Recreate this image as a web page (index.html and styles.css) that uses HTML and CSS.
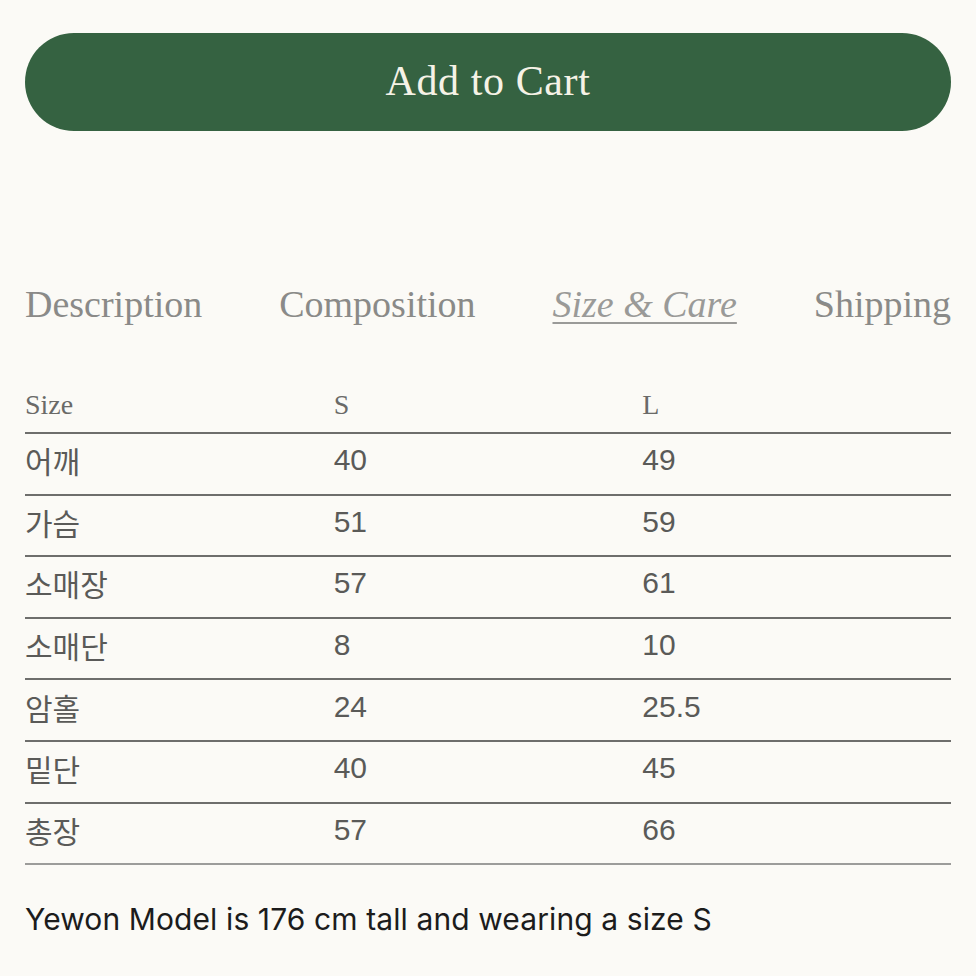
FILE: index.html
```html
<!DOCTYPE html>
<html lang="ko">
<head>
<meta charset="utf-8">
<title>Size &amp; Care</title>
<link rel="stylesheet" href="styles.css">
</head>
<body>
<main class="page">
  <button class="cart-btn" type="button">Add to Cart</button>

  <nav class="tabs">
    <span class="tab">Description</span>
    <span class="tab">Composition</span>
    <span class="tab tab-active">Size &amp; Care</span>
    <span class="tab">Shipping</span>
  </nav>

  <div class="size-table">
    <div class="row head"><span>Size</span><span>S</span><span>L</span></div>
    <div class="row"><span>어깨</span><span>40</span><span>49</span></div>
    <div class="row"><span>가슴</span><span>51</span><span>59</span></div>
    <div class="row"><span>소매장</span><span>57</span><span>61</span></div>
    <div class="row"><span>소매단</span><span>8</span><span>10</span></div>
    <div class="row"><span>암홀</span><span>24</span><span>25.5</span></div>
    <div class="row"><span>밑단</span><span>40</span><span>45</span></div>
    <div class="row last"><span>총장</span><span>57</span><span>66</span></div>
  </div>

  <p class="model-note">Yewon Model is 176 cm tall and wearing a size S</p>
</main>
</body>
</html>
```

FILE: styles.css
```css
html, body {
  margin: 0;
  padding: 0;
  background: #fbfaf6;
}

.page {
  padding: 33px 25px 0;
  display: flex;
  flex-direction: column;
}

.cart-btn {
  height: 98px;
  border: none;
  border-radius: 49px;
  background: #356241;
  color: #f5f2e6;
  font-family: "Liberation Serif", serif;
  font-size: 42px;
  letter-spacing: 0.6px;
  padding: 0 0 2px;
  cursor: pointer;
}

.tabs {
  margin-top: 151px;
  display: flex;
  justify-content: space-between;
  font-family: "Liberation Serif", serif;
  font-size: 38px;
  line-height: 44px;
  color: #8a8a88;
}

.tab-active {
  font-style: italic;
  color: #9a9a98;
  text-decoration: underline;
  text-decoration-thickness: 2px;
  text-underline-offset: 5px;
}

.size-table {
  margin-top: 60px;
  display: flex;
  flex-direction: column;
}

.row {
  display: grid;
  grid-template-columns: repeat(3, 1fr);
  align-items: center;
  height: 61.6px;
  box-sizing: border-box;
  border-bottom: 2px solid #6e6e6c;
  padding-bottom: 7px;
  font-family: "Liberation Sans", "Noto Sans CJK KR", sans-serif;
  font-size: 30px;
  color: #5a5a58;
}

.row.head {
  height: 48px;
  padding-bottom: 9px;
  font-family: "Liberation Serif", "Noto Sans CJK KR", serif;
  font-size: 28px;
  color: #6a6a68;
}

.row.last {
  border-bottom-color: #9c9c9a;
}

.model-note {
  margin: 36px 0 0;
  font-family: Inter, "Liberation Sans", sans-serif;
  font-size: 30px;
  letter-spacing: 0.1px;
  color: #1c1c1c;
}
```
